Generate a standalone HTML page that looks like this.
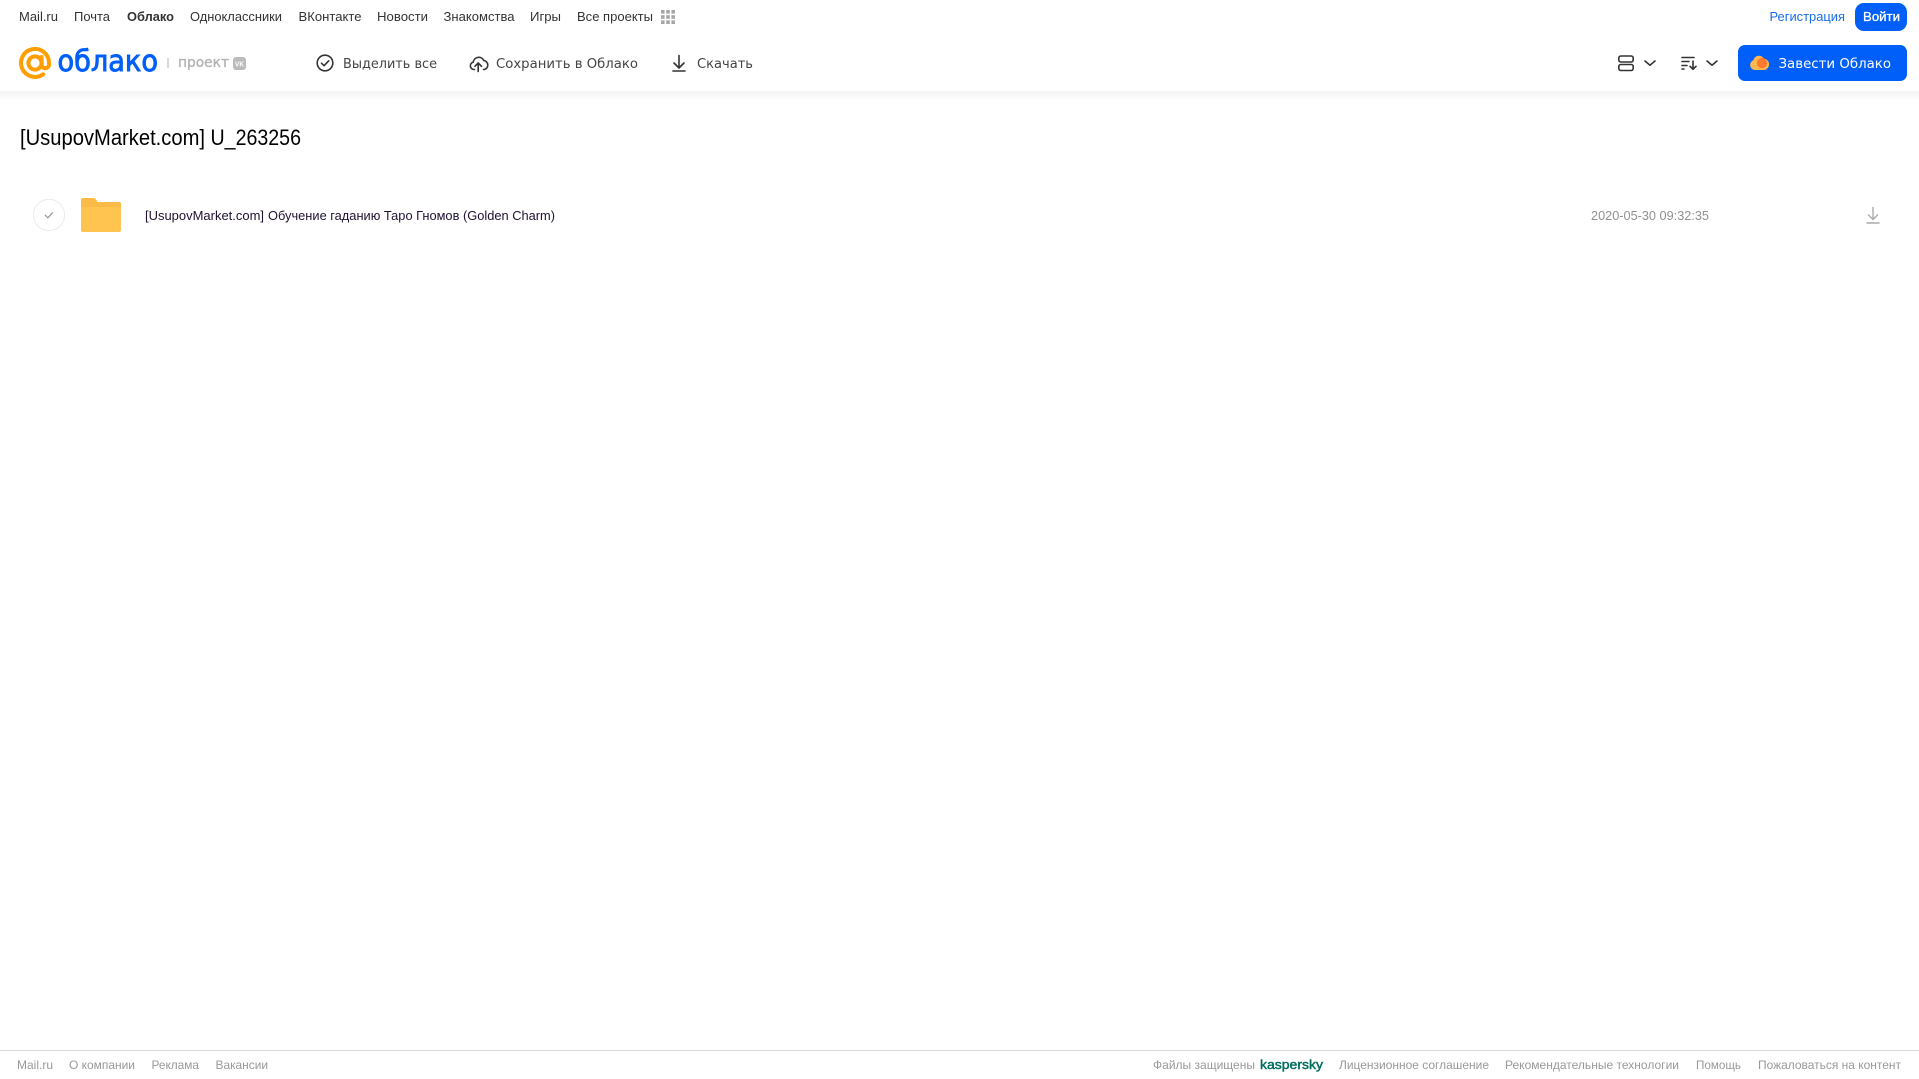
<!DOCTYPE html>
<html lang="ru">
<head>
<meta charset="utf-8">
<title>[UsupovMarket.com] U_263256</title>
<style>
html,body{margin:0;padding:0;background:#fff;width:1919px;height:1079px;overflow:hidden}
.shade{position:absolute;left:0;top:91px;width:1919px;height:10px;background:linear-gradient(#f4f4f4,#fff)}
svg{position:absolute;left:0;top:0}
text{font-family:"Liberation Sans",sans-serif;white-space:pre}
.n{font-size:13px;fill:#333}
.t{font-family:"DejaVu Sans",sans-serif;font-size:13.5px;fill:#444}
.f{font-size:12px;fill:#999}
</style>
</head>
<body>
<div class="shade"></div>
<svg width="1919" height="1079" viewBox="0 0 1919 1079" xmlns="http://www.w3.org/2000/svg">
  <!-- top nav -->
  <text class="n" x="19" y="21" textLength="39" lengthAdjust="spacingAndGlyphs">Mail.ru</text>
  <text class="n" x="74" y="21" textLength="36" lengthAdjust="spacingAndGlyphs">Почта</text>
  <text class="n" x="127" y="21" textLength="47" lengthAdjust="spacingAndGlyphs" font-weight="700">Облако</text>
  <text class="n" x="190" y="21" textLength="92" lengthAdjust="spacingAndGlyphs">Одноклассники</text>
  <text class="n" x="298.5" y="21" textLength="63" lengthAdjust="spacingAndGlyphs">ВКонтакте</text>
  <text class="n" x="377" y="21" textLength="51" lengthAdjust="spacingAndGlyphs">Новости</text>
  <text class="n" x="443.5" y="21" textLength="71" lengthAdjust="spacingAndGlyphs">Знакомства</text>
  <text class="n" x="530" y="21" textLength="31" lengthAdjust="spacingAndGlyphs">Игры</text>
  <text class="n" x="577" y="21" textLength="76" lengthAdjust="spacingAndGlyphs">Все проекты</text>
  <g fill="#a6a6a6">
    <rect x="661" y="10" width="3.6" height="3.6"/><rect x="666.2" y="10" width="3.6" height="3.6"/><rect x="671.4" y="10" width="3.6" height="3.6"/>
    <rect x="661" y="15.2" width="3.6" height="3.6"/><rect x="666.2" y="15.2" width="3.6" height="3.6"/><rect x="671.4" y="15.2" width="3.6" height="3.6"/>
    <rect x="661" y="20.4" width="3.6" height="3.6"/><rect x="666.2" y="20.4" width="3.6" height="3.6"/><rect x="671.4" y="20.4" width="3.6" height="3.6"/>
  </g>
  <text x="1769.5" y="21" font-size="13" fill="#1a6ee8" textLength="75.5" lengthAdjust="spacingAndGlyphs">Регистрация</text>
  <rect x="1855" y="3" width="52" height="28" rx="9" fill="#005ff9"/>
  <text x="1863" y="21" font-size="13" fill="#fff" stroke="#fff" stroke-width=".3" textLength="37" lengthAdjust="spacingAndGlyphs">Войти</text>

  <!-- logo -->
  <g fill="none" stroke="#ff9e00" stroke-width="4" stroke-linecap="round">
    <circle cx="35" cy="63" r="6.6"/>
    <path d="M41.6 57v7.5a3.7 3.7 0 0 0 7.4 0V63a14 14 0 1 0-5.8 11.3"/>
  </g>
  <text x="57.5" y="71" font-size="29" style="font-family:'DejaVu Sans',sans-serif" fill="#005ff9" stroke="#005ff9" stroke-width=".9" textLength="100.5" lengthAdjust="spacingAndGlyphs">облако</text>
  <rect x="167.5" y="58" width="1" height="10" fill="#b5b5b5"/>
  <text x="178" y="67" font-size="14" style="font-family:'DejaVu Sans',sans-serif" fill="#b3b3b3" stroke="#b3b3b3" stroke-width=".35" textLength="51" lengthAdjust="spacingAndGlyphs">проект</text>
  <rect x="233" y="57" width="13" height="13" rx="3" fill="#bbb"/>
  <text x="235" y="66.5" font-size="7.5" font-weight="700" fill="#fff" textLength="9" lengthAdjust="spacingAndGlyphs">VK</text>

  <!-- toolbar -->
  <circle cx="325" cy="63" r="7.8" fill="none" stroke="#333" stroke-width="1.6"/>
  <path d="M321.5 63.2l2.6 2.5 4.6-4.9" fill="none" stroke="#333" stroke-width="1.6" stroke-linecap="round" stroke-linejoin="round"/>
  <text class="t" x="343" y="68" textLength="94" lengthAdjust="spacingAndGlyphs">Выделить все</text>

  <path d="M474.5 69.5h-.5a3.7 3.7 0 0 1-.8-7.3 5.6 5.6 0 0 1 10.6-1.7 4.6 4.6 0 0 1 .6 9h-.9" fill="none" stroke="#333" stroke-width="1.6" stroke-linecap="round" stroke-linejoin="round"/>
  <path d="M478.2 71.5v-8M474.9 66.3l3.3-3.3 3.3 3.3" fill="none" stroke="#333" stroke-width="1.6" stroke-linecap="round" stroke-linejoin="round"/>
  <text class="t" x="496" y="68" textLength="142" lengthAdjust="spacingAndGlyphs">Сохранить в Облако</text>

  <path d="M679 55.5v12M674 63l5 5 5-5M673 71h12" fill="none" stroke="#333" stroke-width="1.6" stroke-linecap="round" stroke-linejoin="round"/>
  <text class="t" x="697" y="68" textLength="56" lengthAdjust="spacingAndGlyphs">Скачать</text>

  <!-- right controls -->
  <g fill="none" stroke="#333" stroke-width="1.6" stroke-linecap="round" stroke-linejoin="round">
    <rect x="1618.8" y="56" width="14.4" height="6" rx="2"/>
    <rect x="1618.8" y="64.5" width="14.4" height="6" rx="2"/>
    <path d="M1645 61l5 4.2 5-4.2"/>
    <path d="M1682 57.5h12M1682 61.5h7M1682 65.5h5M1682 69h2"/>
    <path d="M1693 61v8M1690 66.3l3 3 3-3"/>
    <path d="M1707 61l5 4.2 5-4.2"/>
  </g>
  <rect x="1738" y="45" width="169" height="36" rx="7" fill="#005ff9"/>
  <path d="M1755 70a5 5 0 0 1-1.6-9.7 5.6 5.6 0 0 1 10.3-1.8 5.8 5.8 0 0 1 .6 11.5z" fill="#ffb84d"/>
  <circle cx="1762" cy="63" r="5.2" fill="#ff7a2e"/>
  <text x="1778.5" y="68" font-size="13.5" style="font-family:'DejaVu Sans',sans-serif" fill="#fff" textLength="112.5" lengthAdjust="spacingAndGlyphs">Завести Облако</text>

  <!-- title -->
  <text x="20" y="145" font-size="22" fill="#000" textLength="185" lengthAdjust="spacingAndGlyphs">[UsupovMarket.com]</text>
  <text x="210.5" y="145" font-size="22" fill="#000" textLength="90.5" lengthAdjust="spacingAndGlyphs">U_263256</text>

  <!-- row -->
  <circle cx="49" cy="215" r="15.6" fill="#fff" stroke="#ececec" stroke-width="1"/>
  <path d="M45.3 215.2l2.6 2.6 4.6-5" fill="none" stroke="#999" stroke-width="1.3" stroke-linecap="round" stroke-linejoin="round"/>
  <path d="M81 200a2 2 0 0 1 2-2h10.5a3 3 0 0 1 2.2 1l2 3H119a2 2 0 0 1 2 2v10H81z" fill="#fcbb48"/>
  <path d="M81 207h38a2 2 0 0 1 2 2v21a2 2 0 0 1-2 2H83a2 2 0 0 1-2-2z" fill="#ffc350"/>
  <text x="145" y="220" font-size="13" fill="#1f1230" textLength="119" lengthAdjust="spacingAndGlyphs">[UsupovMarket.com]</text>
  <text x="268" y="220" font-size="13" fill="#1f1230" textLength="287" lengthAdjust="spacingAndGlyphs">Обучение гаданию Таро Гномов (Golden Charm)</text>
  <text x="1591" y="220" font-size="13" fill="#919191" textLength="118" lengthAdjust="spacingAndGlyphs">2020-05-30 09:32:35</text>
  <path d="M1873 207.5v12M1868.5 215l4.5 4.5 4.5-4.5M1867 223h12" fill="none" stroke="#aaa" stroke-width="1.4" stroke-linecap="round" stroke-linejoin="round"/>

  <!-- footer -->
  <rect x="0" y="1050" width="1919" height="1" fill="#d9d9d9"/>
  <text class="f" x="17" y="1069" textLength="36" lengthAdjust="spacingAndGlyphs">Mail.ru</text>
  <text class="f" x="69" y="1069" textLength="66" lengthAdjust="spacingAndGlyphs">О компании</text>
  <text class="f" x="151.5" y="1069" textLength="47.5" lengthAdjust="spacingAndGlyphs">Реклама</text>
  <text class="f" x="215.5" y="1069" textLength="52.5" lengthAdjust="spacingAndGlyphs">Вакансии</text>
  <text class="f" x="1153" y="1069" textLength="102" lengthAdjust="spacingAndGlyphs">Файлы защищены</text>
  <text x="1260" y="1069" font-size="13" fill="#006d5c" stroke="#006d5c" stroke-width=".45" textLength="63" lengthAdjust="spacingAndGlyphs">kaspersky</text>
  <text class="f" x="1339" y="1069" textLength="150" lengthAdjust="spacingAndGlyphs">Лицензионное соглашение</text>
  <text class="f" x="1505" y="1069" textLength="174" lengthAdjust="spacingAndGlyphs">Рекомендательные технологии</text>
  <text class="f" x="1696" y="1069" textLength="45" lengthAdjust="spacingAndGlyphs">Помощь</text>
  <text class="f" x="1758" y="1069" textLength="143" lengthAdjust="spacingAndGlyphs">Пожаловаться на контент</text>
</svg>
</body>
</html>
